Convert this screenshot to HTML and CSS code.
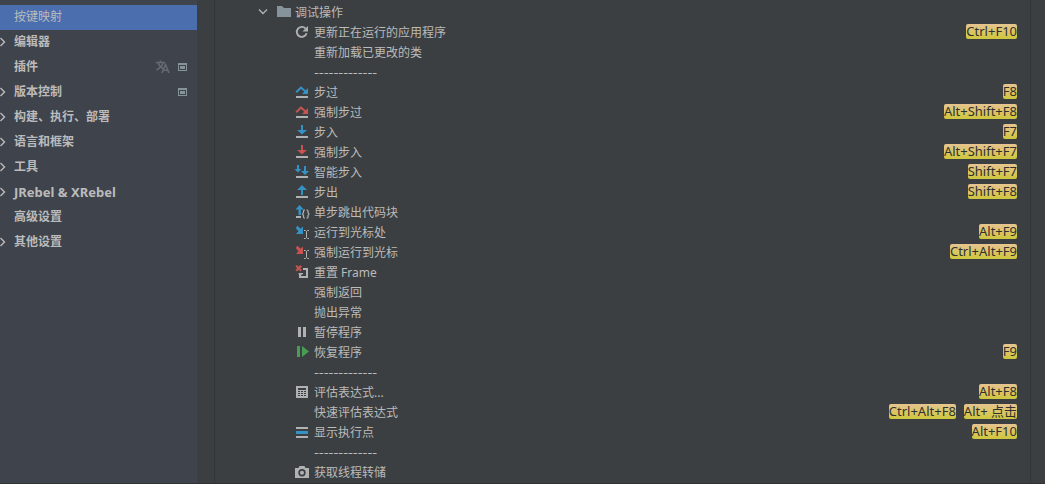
FILE: index.html
```html
<!DOCTYPE html>
<html lang="zh-CN">
<head>
    <meta charset="UTF-8">
    <meta name="viewport" content="width=device-width, initial-scale=1.0">
    <title>按键映射</title>
    <link rel="stylesheet" href="styles.css">
</head>
<body>
    <svg class="sprite" aria-hidden="true">
        <symbol id="chevron" viewBox="0 0 16 16"><path d="M5.5 4l4 4-4 4" fill="none" stroke="currentColor" stroke-width="1.4"/></symbol>
        <symbol id="project" viewBox="0 0 16 16"><path fill-rule="evenodd" d="M3 4h9v8H3zM4 6v5h7V6z"/><path d="M5 7h5v3H5z"/></symbol>
        <symbol id="translate" viewBox="0 0 16 16"><path d="M1 3.5h9M5.5 1.5v2M8.3 3.5C7.5 6.5 5 9 1.5 11M3 3.5c1 3 3 5 5 6M7 14l3.5-8.5L14 14M8.3 11.3h4.4" fill="none" stroke="currentColor" stroke-width="1.6"/></symbol>
        <symbol id="folder" viewBox="0 0 16 16"><path d="M2 2h5l2 2h7v9H2z"/></symbol>
        <symbol id="refresh" viewBox="0 0 16 16"><path d="M12.6 9.3A5 5 0 1 1 11.5 4.5" fill="none" stroke="currentColor" stroke-width="1.9"/><path d="M14 2v5.5H8.5z"/></symbol>
        <symbol id="step-over" viewBox="0 0 16 16"><path d="M2.2 8.3L7 3.5l4.5 4" fill="none" stroke="currentColor" stroke-width="2"/><path d="M14 4v6H8z"/><path class="base" d="M2 12h12v2H2z"/></symbol>
        <symbol id="step-into" viewBox="0 0 16 16"><path d="M7 1h2v5h4L8 10.5 3 6h4z"/><path class="base" d="M2 12h12v2H2z"/></symbol>
        <symbol id="smart-step" viewBox="0 0 16 16"><path d="M3 1h2v4h2.5L4 8.5.5 5H3zM10 2h2v5h3l-4 4-4-4h3z"/><path class="base" d="M2 12h12v2H2z"/></symbol>
        <symbol id="step-out" viewBox="0 0 16 16"><path d="M8 1l5 5H9v5H7V6H3z"/><path class="base" d="M2 12h12v2H2z"/></symbol>
        <symbol id="step-block" viewBox="0 0 16 16"><path d="M5.5 1L10 5.500H7V11H4.500V5.500H1.500z"/><path class="base" d="M2 12h5v2H2z"/><path class="thin brace" d="M11 6h-.7Q9.500 6 9.500 7v1.500L8.500 10l1 1.500V13q0 1 .8 1h.7M12.500 6h.7q.8 0 .8 1v1.500l1 1.500-1 1.500V13q0 1-.8 1h-.7"/></symbol>
        <symbol id="run-cursor" viewBox="0 0 16 16"><path d="M3.500 1.700l3 3L9 2.500V10H2L4.500 7.200 1.700 4z"/><path class="thin" d="M10 6.5h1.500l1 1 1-1H15M12.5 7.5v6M10 14.5h1.500l1-1 1 1H15"/></symbol>
        <symbol id="drop-frame" viewBox="0 0 16 16"><path d="M2.2 1.700l5 5M7.200 1.700l-5 5" stroke="currentColor" stroke-width="2.200"/><path d="M9 5h4v8H7" class="thin frame"/><path class="base" d="M4.500 9H9v1L7 11v3H5v-3z"/></symbol>
        <symbol id="pause" viewBox="0 0 16 16"><path d="M4 3h3v10H4zM9 3h3v10H9z"/></symbol>
        <symbol id="resume" viewBox="0 0 16 16"><path d="M3 2h3v11H3zM8 2l7 5.5L8 13z"/></symbol>
        <symbol id="calculator" viewBox="0 0 16 16"><path fill-rule="evenodd" d="M2 2h12v12H2zM4 4v2h8V4zM4 7v1h2V7zM7 7v1h2V7zM10 7v1h2V7zM4 9v1h2V9zM7 9v1h2V9zM10 9v1h2V9zM4 11v1h2v-1zM7 11v1h2v-1zM10 11v1h2v-1z"/></symbol>
        <symbol id="exec-point" viewBox="0 0 16 16"><path d="M2 7h12v3H2z"/><path class="base" d="M2 3h12v2H2zM2 12h12v2H2z"/></symbol>
        <symbol id="camera" viewBox="0 0 16 16"><path fill-rule="evenodd" d="M1 4h3.5l1-2h5l1 2H15v10H1zM8 5a3.7 3.7 0 1 0 0 7.4A3.7 3.7 0 0 0 8 5zM8 6.7a2 2 0 1 1 0 4 2 2 0 0 1 0-4z"/></symbol>
    </svg>

    <div class="settings">
        <nav class="sidebar">
            <a class="nav-item selected" href="#"><span class="nav-arrow"></span><span class="nav-label">按键映射</span></a>
            <a class="nav-item" href="#"><svg class="nav-arrow"><use href="#chevron"/></svg><span class="nav-label">编辑器</span></a>
            <a class="nav-item" href="#"><span class="nav-arrow"></span><span class="nav-label">插件</span><svg class="icon dim"><use href="#translate"/></svg><svg class="icon slate"><use href="#project"/></svg></a>
            <a class="nav-item" href="#"><svg class="nav-arrow"><use href="#chevron"/></svg><span class="nav-label">版本控制</span><svg class="icon slate"><use href="#project"/></svg></a>
            <a class="nav-item" href="#"><svg class="nav-arrow"><use href="#chevron"/></svg><span class="nav-label">构建、执行、部署</span></a>
            <a class="nav-item" href="#"><svg class="nav-arrow"><use href="#chevron"/></svg><span class="nav-label">语言和框架</span></a>
            <a class="nav-item" href="#"><svg class="nav-arrow"><use href="#chevron"/></svg><span class="nav-label">工具</span></a>
            <a class="nav-item" href="#"><svg class="nav-arrow"><use href="#chevron"/></svg><span class="nav-label latin">JRebel &amp; XRebel</span></a>
            <a class="nav-item" href="#"><span class="nav-arrow"></span><span class="nav-label">高级设置</span></a>
            <a class="nav-item" href="#"><svg class="nav-arrow"><use href="#chevron"/></svg><span class="nav-label">其他设置</span></a>
        </nav>

        <main class="keymap">
            <button class="group" type="button" aria-expanded="true"><svg class="icon open"><use href="#chevron"/></svg><svg class="icon slate"><use href="#folder"/></svg><span class="name">调试操作</span></button>
            <ul class="actions">
                <li><svg class="icon"><use href="#refresh"/></svg><span class="name">更新正在运行的应用程序</span><kbd>Ctrl+F10</kbd></li>
                <li><span class="icon"></span><span class="name">重新加载已更改的类</span></li>
                <li><span class="icon"></span><span class="dashes">-------------</span></li>
                <li><svg class="icon blue"><use href="#step-over"/></svg><span class="name">步过</span><kbd>F8</kbd></li>
                <li><svg class="icon red"><use href="#step-over"/></svg><span class="name">强制步过</span><kbd>Alt+Shift+F8</kbd></li>
                <li><svg class="icon blue"><use href="#step-into"/></svg><span class="name">步入</span><kbd>F7</kbd></li>
                <li><svg class="icon red"><use href="#step-into"/></svg><span class="name">强制步入</span><kbd>Alt+Shift+F7</kbd></li>
                <li><svg class="icon blue"><use href="#smart-step"/></svg><span class="name">智能步入</span><kbd>Shift+F7</kbd></li>
                <li><svg class="icon blue"><use href="#step-out"/></svg><span class="name">步出</span><kbd>Shift+F8</kbd></li>
                <li><svg class="icon blue"><use href="#step-block"/></svg><span class="name">单步跳出代码块</span></li>
                <li><svg class="icon blue"><use href="#run-cursor"/></svg><span class="name">运行到光标处</span><kbd>Alt+F9</kbd></li>
                <li><svg class="icon red"><use href="#run-cursor"/></svg><span class="name">强制运行到光标</span><kbd>Ctrl+Alt+F9</kbd></li>
                <li><svg class="icon red"><use href="#drop-frame"/></svg><span class="name">重置 Frame</span></li>
                <li><span class="icon"></span><span class="name">强制返回</span></li>
                <li><span class="icon"></span><span class="name">抛出异常</span></li>
                <li><svg class="icon"><use href="#pause"/></svg><span class="name">暂停程序</span></li>
                <li><svg class="icon green"><use href="#resume"/></svg><span class="name">恢复程序</span><kbd>F9</kbd></li>
                <li><span class="icon"></span><span class="dashes">-------------</span></li>
                <li><svg class="icon"><use href="#calculator"/></svg><span class="name">评估表达式...</span><kbd>Alt+F8</kbd></li>
                <li><span class="icon"></span><span class="name">快速评估表达式</span><kbd>Ctrl+Alt+F8</kbd><kbd>Alt+ 点击</kbd></li>
                <li><svg class="icon blue"><use href="#exec-point"/></svg><span class="name">显示执行点</span><kbd>Alt+F10</kbd></li>
                <li><span class="icon"></span><span class="dashes">-------------</span></li>
                <li><svg class="icon"><use href="#camera"/></svg><span class="name">获取线程转储</span></li>
            </ul>
        </main>
    </div>
</body>
</html>
```
FILE: styles.css
```css
* {
    box-sizing: border-box;
}
body {
    margin: 0;
    background-color: #3c3f41;
    color: #bbbbbb;
    font-family: "Noto Sans", "Noto Sans CJK SC", sans-serif;
    font-size: 12px;
    line-height: 20px;
}
.sprite {
    display: none;
}
.settings {
    display: flex;
    min-height: 100vh;
    border-bottom: 1px solid #323234;
}
.icon {
    flex: none;
    width: 16px;
    height: 16px;
    color: #afb1b3;
    fill: currentColor;
}
.icon.blue {
    color: #3592c4;
}
.icon.red {
    color: #c75450;
}
.icon.green {
    color: #499c54;
}
.icon.slate {
    color: #87939a;
}
.icon.dim {
    color: #646a73;
}
.base {
    fill: #afb1b3;
}
.thin {
    fill: none;
    stroke: #afb1b3;
    stroke-width: 1;
}
.brace {
    stroke-width: 1.2;
}
.frame {
    stroke-width: 2;
}

/* Settings categories */
.sidebar {
    flex: none;
    width: 197px;
    padding-top: 5px;
    background-color: #3f434c;
}
.nav-item {
    display: flex;
    align-items: center;
    gap: 4px;
    height: 25px;
    padding: 0 6px 2px 0;
    color: #bbbbbb;
    font-weight: 600;
    text-decoration: none;
}
.nav-item.selected {
    background-color: #4b6eaf;
    font-weight: 400;
}
.nav-arrow {
    flex: none;
    width: 16px;
    height: 16px;
    margin: 0 -1px 0 -5px;
}
.nav-label {
    flex: 1;
}
.latin {
    font-size: 13px;
    font-weight: 700;
}

/* Keymap tree */
.keymap {
    flex: 1;
    margin: 0 14px 0 17px;
    padding: 2px 13px 0 40px;
    border: solid #323436;
    border-width: 0 1px;
}
.group {
    display: flex;
    align-items: center;
    gap: 4px;
    height: 20px;
    padding: 0;
    border: 0;
    background: none;
    color: inherit;
    font: inherit;
}
.open {
    transform: rotate(90deg);
}
.actions {
    margin: 0;
    padding: 0 0 0 39px;
    list-style: none;
}
.actions li {
    display: flex;
    align-items: center;
    gap: 4px;
    height: 20px;
}
.name {
    flex: 1;
    padding-top: 2px;
}
.dashes {
    padding-bottom: 2px;
    font-family: "Noto Sans CJK SC", sans-serif;
    font-size: 14px;
}
kbd {
    height: 15px;
    margin-bottom: 1px;
    border-radius: 2px;
    background: linear-gradient(#e6c491, #cfc73b);
    color: #303030;
    font-family: inherit;
    font-size: 13px;
    line-height: 15px;
}
kbd + kbd {
    margin-left: 4px;
}
```
